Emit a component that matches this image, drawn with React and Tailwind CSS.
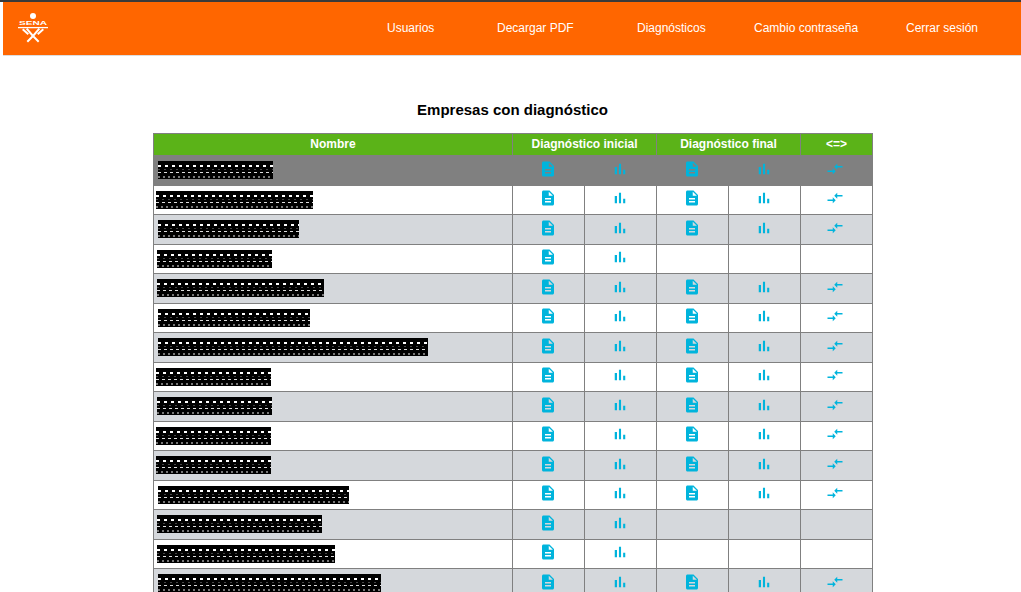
import React from 'react';

const navItems = [
  { label: 'Usuarios', cls: 'w-[47px] mr-[63px]' },
  { label: 'Decargar PDF', cls: 'w-[76px] mr-[64px]' },
  { label: 'Diagnósticos', cls: 'w-[69px] mr-[48px]' },
  { label: 'Cambio contraseña', cls: 'w-[103px] mr-[49px]' },
  { label: 'Cerrar sesión', cls: 'w-[71px]' },
];

// names are blacked out in the source, only the bar size is left
const rows = [
  { bar: 'ml-[4px] w-[115px]', final: true },
  { bar: 'ml-[2px] w-[157px]', final: true },
  { bar: 'ml-[4px] w-[141px]', final: true },
  { bar: 'ml-[3px] w-[115px]', final: false },
  { bar: 'ml-[3px] w-[167px]', final: true },
  { bar: 'ml-[4px] w-[152px]', final: true },
  { bar: 'ml-[4px] w-[270px]', final: true },
  { bar: 'ml-[2px] w-[115px]', final: true },
  { bar: 'ml-[3px] w-[115px]', final: true },
  { bar: 'ml-[2px] w-[115px]', final: true },
  { bar: 'ml-[2px] w-[115px]', final: true },
  { bar: 'ml-[4px] w-[191px]', final: true },
  { bar: 'ml-[3px] w-[165px]', final: false },
  { bar: 'ml-[3px] w-[178px]', final: false },
  { bar: 'ml-[4px] w-[223px]', final: true },
];

function FileIcon() {
  return (
    <svg viewBox="0 0 24 24" className="mx-auto block h-[18px] w-[18px] fill-[#00b4dc]">
      <path d="M14 2H6c-1.1 0-2 .9-2 2v16c0 1.1.9 2 2 2h12c1.1 0 2-.9 2-2V8l-6-6zm2 16H8v-2h8v2zm0-4H8v-2h8v2zm-3-5V3.5L18.5 9H13z" />
    </svg>
  );
}

function BarsIcon() {
  return (
    <svg viewBox="0 0 24 24" className="mx-auto block h-[18px] w-[18px] fill-[#00b4dc]">
      <path d="M5 9.2h3V19H5zM10.6 5h2.8v14h-2.8zm5.6 8H19v6h-2.8z" />
    </svg>
  );
}

function CompareIcon() {
  return (
    <svg viewBox="0 0 24 24" className="mx-auto block h-[18px] w-[18px] fill-[#00b4dc]">
      <path d="M9.01 14H2v2h7.01v3L13 15l-3.99-4v3zm5.98-1v-3H22V8h-7.01V5L11 9l3.99 4z" />
    </svg>
  );
}

function SenaLogo() {
  return (
    <svg viewBox="0 0 32 32" className="h-[32px] w-[32px] fill-white stroke-white">
      <circle cx="16" cy="4" r="3" stroke="none" />
      <text x="16" y="13" textAnchor="middle" stroke="none" fontSize="6" fontWeight="700" fontFamily="'Liberation Sans', sans-serif" textLength="28" lengthAdjust="spacingAndGlyphs">SENA</text>
      <path d="M1 15.6h30" strokeWidth="1.3" fill="none" />
      <path d="M5.7 17.3l5.6 5M26.3 17.3l-5.6 5M9.7 16.7l6.3 7.3M22.3 16.7L16 24M16 24l-5.7 5.7M16 24l5.7 5.7" strokeWidth="2" fill="none" />
    </svg>
  );
}

function Row({ row, index }) {
  const bg = index === 0 ? 'bg-[#808080]' : index % 2 === 0 ? 'bg-[#d5d8dc]' : 'bg-white';
  const cell = index === 0
    ? 'h-[29.5px] border-y border-[#808080] p-0 text-center'
    : 'h-[29.5px] border border-[#808080] p-0 text-center';
  const iconCell = `${cell} pr-[1px] pb-[3px]`;
  return (
    <tr className={bg}>
      <td className={cell}>
        <div
          className={`${row.bar} h-[18px] bg-black bg-[repeating-linear-gradient(90deg,#fff_0,#fff_3px,#000_3px,#000_7px),repeating-linear-gradient(90deg,#444_0,#444_2px,#000_2px,#000_6px),repeating-linear-gradient(90deg,#ddd_0,#ddd_3px,#000_3px,#000_6px),repeating-linear-gradient(90deg,#777_0,#777_2px,#000_2px,#000_5px)] bg-[length:100%_2px,100%_1px,100%_1px,100%_2px] bg-[position:0_4px,0_8px,0_11px,0_15px] bg-no-repeat`}
        />
      </td>
      <td className={iconCell}><FileIcon /></td>
      <td className={iconCell}><BarsIcon /></td>
      <td className={iconCell}>{row.final && <FileIcon />}</td>
      <td className={iconCell}>{row.final && <BarsIcon />}</td>
      <td className={`${cell} pr-[3px] pb-[3px]`}>{row.final && <CompareIcon />}</td>
    </tr>
  );
}

export default function App() {
  return (
    <div className="h-screen overflow-hidden bg-white font-['Liberation_Sans',Arial,sans-serif]">
      <div className="h-[2px] bg-[#3a3a3a]" />
      <nav className="ml-[3px] flex h-[54px] items-center border-b border-[#dddddd] bg-[#ff6600] pb-[2px] pl-[14px]">
        <SenaLogo />
        <ul className="ml-[338px] flex text-[12px] text-white">
          {navItems.map((item) => (
            <li key={item.label} className={`${item.cls} whitespace-nowrap`}>{item.label}</li>
          ))}
        </ul>
      </nav>

      <h1 className="mt-[44px] pl-[4px] text-center text-[15px] leading-[20px] font-bold text-black">Empresas con diagnóstico</h1>

      <table className="ml-[153px] mt-[13px] w-[719px] table-fixed border-collapse border border-[#808080]">
        <colgroup>
          <col className="w-[359px]" />
          <col className="w-[72px]" />
          <col className="w-[72px]" />
          <col className="w-[72px]" />
          <col className="w-[72px]" />
          <col className="w-[72px]" />
        </colgroup>
        <thead>
          <tr className="h-[22px] bg-[#5bb318] text-[12px] font-bold text-white">
            <th className="border border-[#808080] p-0 pb-[2px]">Nombre</th>
            <th colSpan={2} className="border border-[#808080] p-0 pb-[2px]">Diagnóstico inicial</th>
            <th colSpan={2} className="border border-[#808080] p-0 pb-[2px]">Diagnóstico final</th>
            <th className="border border-[#808080] p-0 pb-[2px]">&lt;=&gt;</th>
          </tr>
        </thead>
        <tbody>
          {rows.map((row, i) => (
            <Row key={i} row={row} index={i} />
          ))}
        </tbody>
      </table>
    </div>
  );
}
